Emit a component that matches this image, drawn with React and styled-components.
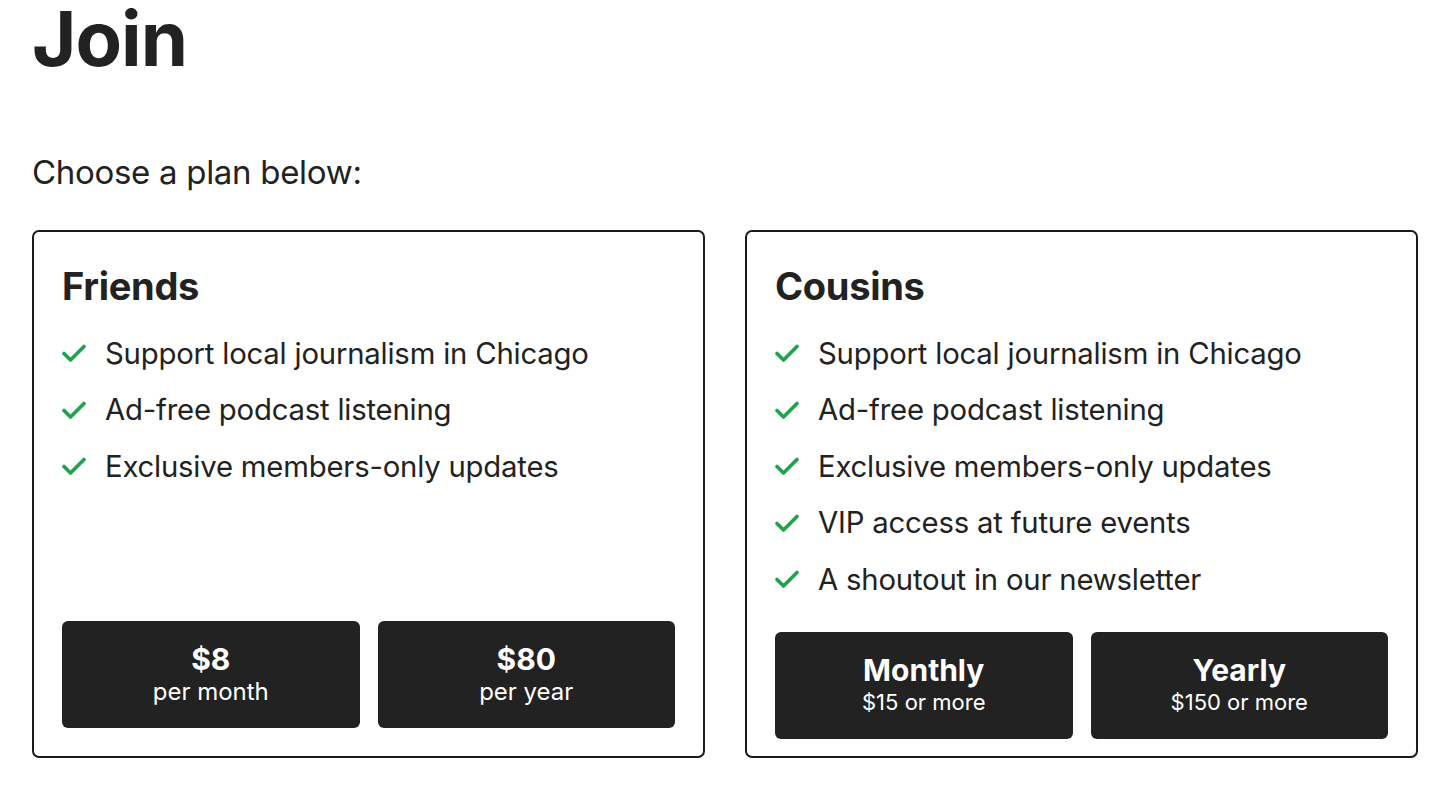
import React from "react";
import styled, { createGlobalStyle } from "styled-components";

const plans = [
  {
    name    : "Friends",
    perks   : [
      "Support local journalism in Chicago",
      "Ad-free podcast listening",
      "Exclusive members-only updates",
    ],
    options : [
      { top: "$8", sub: "per month" },
      { top: "$80", sub: "per year" },
    ],
    bigSub  : true,
    tail    : 28,
  },
  {
    name    : "Cousins",
    perks   : [
      "Support local journalism in Chicago",
      "Ad-free podcast listening",
      "Exclusive members-only updates",
      "VIP access at future events",
      "A shoutout in our newsletter",
    ],
    options : [
      { top: "Monthly", sub: "$15 or more" },
      { top: "Yearly", sub: "$150 or more" },
    ],
    bigSub  : false,
    tail    : 17,
  },
]


export default function App() {
  return (
    <>
      <GlobalStyle />
      <Page >
        <Title >Join</Title >
        <Lead >Choose a plan below:</Lead >
        <Plans >
          {plans.map( ( plan ) => (
            <Card key = {plan.name} $tail = {plan.tail} >
              <PlanName >{plan.name}</PlanName >
              <Perks >
                {plan.perks.map( ( perk ) => (
                  <Perk key = {perk} >
                    <Check />
                    <span >{perk}</span >
                  </Perk >
                ) )}
              </Perks >
              <Options >
                {plan.options.map( ( option ) => (
                  <Option key = {option.top} >
                    <OptionTop >{option.top}</OptionTop >
                    <OptionSub $big = {plan.bigSub} >{option.sub}</OptionSub >
                  </Option >
                ) )}
              </Options >
            </Card >
          ) )}
        </Plans >
      </Page >
    </>
  )
}


const Check = () => (
  <CheckMark viewBox = "0 0 24 24" >
    <path
      d = "M2 12.5 L8.5 19 L22 5.5"
      fill = "none"
      stroke = "#1fa34a"
      strokeWidth = "3.6"
      strokeLinecap = "round"
      strokeLinejoin = "round"
    />
  </CheckMark >
)



const GlobalStyle = createGlobalStyle`
  body {
    margin: 0;
    background: #fff;
    color: #222;
    font-family: Inter, "Noto Sans", "Liberation Sans", sans-serif;
  }
`;


const Page = styled.div`
  padding: 0 38px 0 32px;
`;


const Title = styled.h1`
  margin: 0;
  font-size: 76px;
  line-height: 76px;
  font-weight: 700;
  letter-spacing: -1px;
`;


const Lead = styled.p`
  margin: 74px 0 0;
  font-size: 33px;
  line-height: 44px;
  letter-spacing: -0.3px;
`;


const Plans = styled.div`
  display: grid;
  grid-template-columns: 1fr 1fr;
  gap: 40px;
  margin-top: 36px;
  align-items: stretch;
`;


const Card = styled.div`
  display: flex;
  flex-direction: column;
  border: 2px solid #1a1a1a;
  border-radius: 7px;
  padding: 28px 28px ${( p ) => p.$tail}px;
`;


const PlanName = styled.h2`
  margin: 0;
  font-size: 38px;
  line-height: 52px;
  font-weight: 700;
  letter-spacing: -0.3px;
`;


const Perks = styled.ul`
  list-style: none;
  margin: 13px 0 0;
  padding: 0;
`;


const Perk = styled.li`
  display: flex;
  align-items: center;
  gap: 19px;
  height: 56.5px;
  font-size: 29.3px;
  letter-spacing: -0.2px;
`;


const CheckMark = styled.svg`
  width: 24px;
  height: 24px;
  flex: none;
`;


const Options = styled.div`
  display: grid;
  grid-template-columns: 1fr 1fr;
  gap: 18px;
  margin-top: auto;
  padding-top: 24px;
`;


const Option = styled.button`
  display: flex;
  flex-direction: column;
  align-items: center;
  justify-content: center;
  height: 107px;
  border: 0;
  border-radius: 6px;
  background: #222;
  color: #fff;
  font-family: inherit;
  cursor: pointer;
`;


const OptionTop = styled.span`
  font-size: 30px;
  line-height: 34px;
  font-weight: 700;
`;


const OptionSub = styled.span`
  font-size: ${( p ) => ( p.$big ? "24px" : "22px" )};
  line-height: 31px;
`;
